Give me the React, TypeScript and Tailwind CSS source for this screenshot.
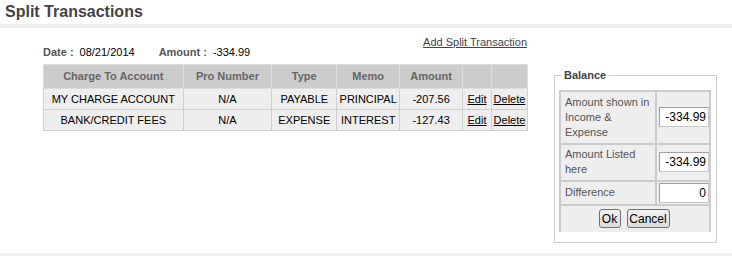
const rows = [
  { account: 'MY CHARGE ACCOUNT', pro: 'N/A', type: 'PAYABLE', memo: 'PRINCIPAL', amount: '-207.56' },
  { account: 'BANK/CREDIT FEES', pro: 'N/A', type: 'EXPENSE', memo: 'INTEREST', amount: '-127.43' },
];

const th = 'border border-[#dcdcdc] font-bold text-[#666] text-[11px] h-[24px] p-0 text-center';
const td = 'border border-[#d0d0d0] text-[11px] text-black h-[21px] p-0 text-center';

function WinButton({ children, className = '' }: { children: React.ReactNode; className?: string }) {
  return (
    <button
      className={`h-[19px] rounded-[3px] border border-[#707070] bg-gradient-to-b from-[#f2f2f2] to-[#dcdcdc] text-[12px] leading-none text-black ${className}`}
    >
      {children}
    </button>
  );
}

function BalanceInput({ value }: { value: string }) {
  return (
    <div className="w-[50px] h-[20px] bg-white border border-[#c8c8c8] border-t-[#a0a0a0] border-l-[#a0a0a0] text-right pr-[2px] text-[12px] leading-[18px] text-black">
      {value}
    </div>
  );
}

export default function App() {
  return (
    <div className="w-[732px] h-[258px] bg-white font-['Liberation_Sans',Arial,sans-serif] flex flex-col">
      <div className="h-[24px] pl-[5px] pt-[2px] text-[16px] font-bold text-[#444] leading-[20px]">
        Split Transactions
      </div>
      <div className="h-[4px] bg-[#eeeeee]" />
      <div className="h-[225px] ml-[3px] bg-white flex">
        <div className="w-[525px] pl-[40px] pt-[12px]">
          <div className="flex items-end justify-between h-[24px] pb-[6px]">
            <div className="flex text-[11px] leading-none">
              <span className="font-bold text-[#555]">Date :</span>
              <span className="ml-[6px] text-black">08/21/2014</span>
              <span className="ml-[24px] font-bold text-[#555]">Amount :</span>
              <span className="ml-[6px] text-black">-334.99</span>
            </div>
            <a className="text-[11px] text-[#444] underline leading-none mb-[10px] mr-[1px]">
              Add Split Transaction
            </a>
          </div>
          <table className="border-collapse w-[485px] bg-[#eeeeee]">
            <thead>
              <tr className="bg-[#cccccc]">
                <th className={`${th} w-[140px]`}>Charge To Account</th>
                <th className={`${th} w-[89px]`}>Pro Number</th>
                <th className={`${th} w-[65px]`}>Type</th>
                <th className={`${th} w-[63px]`}>Memo</th>
                <th className={`${th} w-[63px]`}>Amount</th>
                <th className={`${th} w-[29px]`}></th>
                <th className={`${th} w-[36px]`}></th>
              </tr>
            </thead>
            <tbody>
              {rows.map((r) => (
                <tr key={r.account}>
                  <td className={td}>{r.account}</td>
                  <td className={td}>{r.pro}</td>
                  <td className={td}>{r.type}</td>
                  <td className={td}>{r.memo}</td>
                  <td className={td}>{r.amount}</td>
                  <td className={`${td} text-[#444] underline`}>Edit</td>
                  <td className={`${td} text-[#444] underline`}>Delete</td>
                </tr>
              ))}
            </tbody>
          </table>
        </div>
        <div className="pl-[26px] pt-[39px]">
          <fieldset className="w-[163px] h-[176px] border border-[#cccccc] px-[4px] pb-[8px] pt-0">
            <legend className="px-[3px] ml-[2px] text-[11px] font-bold text-[#444]">Balance</legend>
            <div className="w-[152px] border-2 border-b-0 border-[#cccccc] bg-[#eeeeee] text-[11px] text-[#555] leading-[15px] mt-[6px]">
              <div className="flex h-[53px] border-b-2 border-[#cccccc]">
                <div className="w-[96px] border-r-2 border-[#cccccc] pl-[4px] pt-[3px]">
                  Amount shown in Income &amp; Expense
                </div>
                <div className="flex-1 flex items-center pl-[2px]">
                  <BalanceInput value="-334.99" />
                </div>
              </div>
              <div className="flex h-[37px] border-b-2 border-[#cccccc]">
                <div className="w-[96px] border-r-2 border-[#cccccc] pl-[4px] pt-[2px]">
                  Amount Listed here
                </div>
                <div className="flex-1 flex items-center pl-[2px]">
                  <BalanceInput value="-334.99" />
                </div>
              </div>
              <div className="flex h-[24px] border-b-2 border-[#cccccc]">
                <div className="w-[96px] border-r-2 border-[#cccccc] pl-[4px] flex items-center">
                  Difference
                </div>
                <div className="flex-1 flex items-center pl-[2px]">
                  <BalanceInput value="0" />
                </div>
              </div>
              <div className="h-[26px] flex items-center justify-center gap-[6px] pr-[2px]">
                <WinButton className="w-[22px]">Ok</WinButton>
                <WinButton className="w-[43px]">Cancel</WinButton>
              </div>
            </div>
          </fieldset>
        </div>
      </div>
      <div className="h-[3px] bg-[#eeeeee]" />
    </div>
  );
}
